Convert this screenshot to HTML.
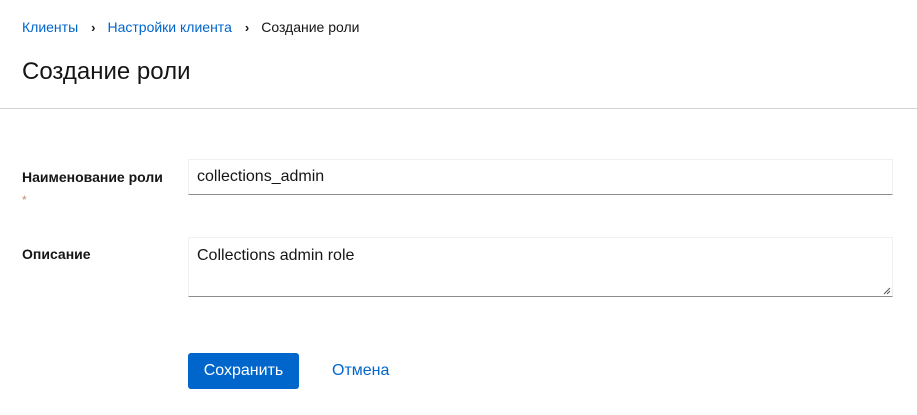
<!DOCTYPE html>
<html><head><meta charset="utf-8"><style>
body{margin:0;width:917px;height:415px;background:#fff;font-family:"Liberation Sans",sans-serif;color:#151515;position:relative;overflow:hidden}
.a{position:absolute;white-space:nowrap}
.bc{top:18px;left:22px;font-size:14px;line-height:18px}
.bc a{color:#0066cc;text-decoration:none}
.sep{display:inline-block;margin:0 12px 0 13px;font-weight:bold;font-size:13px}
h1{position:absolute;top:57px;left:22px;margin:0;font-size:24px;font-weight:normal;line-height:30px}
.hr{position:absolute;top:108px;left:0;width:917px;height:1px;background:#d2d2d2}
.lbl{font-size:14px;font-weight:bold;left:22px}
.inp{position:absolute;left:188px;width:705px;background:#fff;border:1px solid #f0f0f0;border-bottom:1px solid #8a8d90;box-sizing:border-box;font-size:16px;color:#151515;padding-left:8px}
.btn{position:absolute;left:188px;top:353px;width:111px;height:36px;background:#0066cc;border-radius:3px;color:#fff;font-size:16px;line-height:36px;text-align:center}
</style></head><body>
<div class="a bc"><a>Клиенты</a><span class="sep">›</span><a>Настройки клиента</a><span class="sep" style="color:#151515">›</span>Создание роли</div>
<h1>Создание роли</h1>
<div class="hr"></div>
<div class="a lbl" style="top:169px">Наименование роли</div>
<div class="a" style="top:193px;left:22px;color:#c58c6c;font-size:12px">*</div>
<div class="inp" style="top:159px;height:36px;line-height:34px">collections_admin</div>
<div class="a lbl" style="top:246px">Описание</div>
<div class="inp" style="top:237px;height:60px;line-height:20px;padding-top:8px">Collections admin role
<svg style="position:absolute;right:1px;bottom:1px" width="8" height="8"><path d="M7 1L1 7M7 4L4 7" stroke="#555" stroke-width="1"/></svg></div>
<div class="btn">Сохранить</div>
<div class="a" style="left:332px;top:362px;font-size:16px;color:#0066cc">Отмена</div>
</body></html>
